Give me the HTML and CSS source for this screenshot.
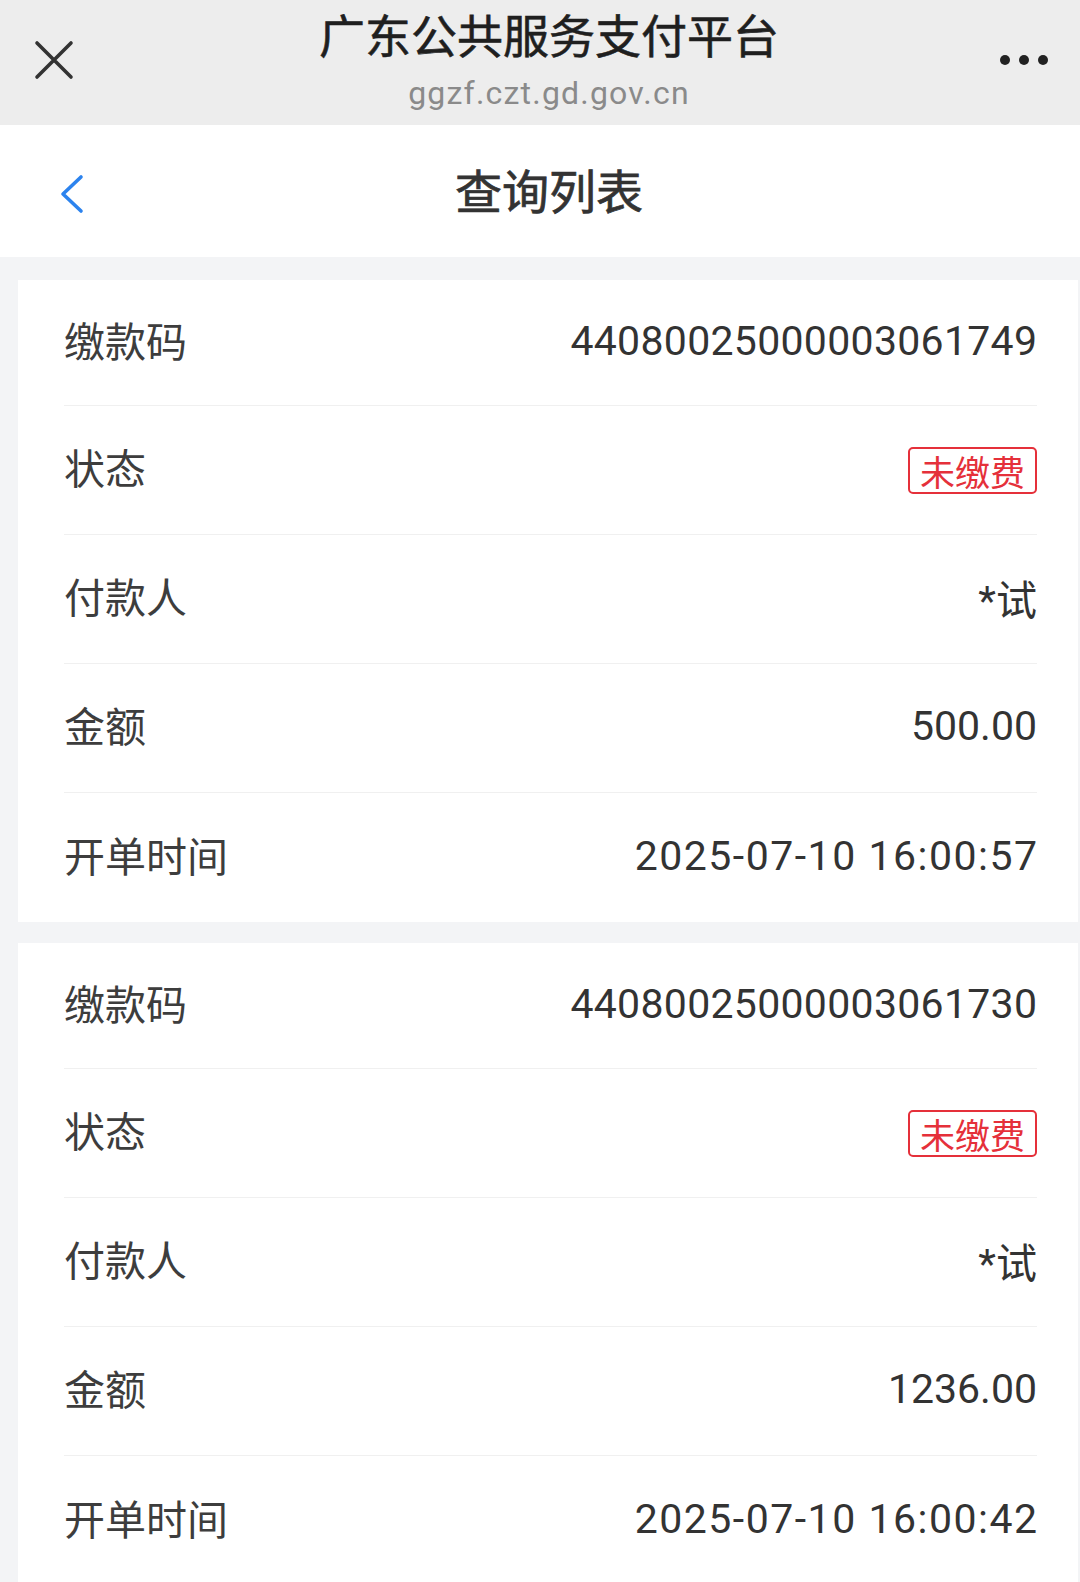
FILE: index.html
```html
<!DOCTYPE html>
<html lang="zh-CN">
<head>
  <meta charset="UTF-8">
  <title>查询列表</title>
  <link rel="stylesheet" href="styles.css">
</head>
<body>
  <header class="topbar">
    <svg class="close" width="40" height="40" viewBox="0 0 40 40">
      <path d="M3 3 L37 37 M37 3 L3 37" stroke="#333" stroke-width="3.6" stroke-linecap="round" fill="none"/>
    </svg>
    <div class="site">
      <h1>广东公共服务支付平台</h1>
      <p>ggzf.czt.gd.gov.cn</p>
    </div>
    <div class="more"><i></i><i></i><i></i></div>
  </header>

  <nav class="navbar">
    <svg class="back" width="24" height="40" viewBox="0 0 24 40">
      <polyline points="21,3 3,20 21,37" stroke="#2c83ee" stroke-width="3.6" stroke-linecap="round" stroke-linejoin="round" fill="none"/>
    </svg>
    <h2>查询列表</h2>
  </nav>

  <main class="list">
    <section class="card">
      <div class="row"><span class="label">缴款码</span><span class="value code">44080025000003061749</span></div>
      <div class="row"><span class="label">状态</span><span class="badge">未缴费</span></div>
      <div class="row"><span class="label">付款人</span><span class="value">*试</span></div>
      <div class="row"><span class="label">金额</span><span class="value">500.00</span></div>
      <div class="row"><span class="label">开单时间</span><span class="value time">2025-07-10 16:00:57</span></div>
    </section>
    <section class="card">
      <div class="row"><span class="label">缴款码</span><span class="value code">44080025000003061730</span></div>
      <div class="row"><span class="label">状态</span><span class="badge">未缴费</span></div>
      <div class="row"><span class="label">付款人</span><span class="value">*试</span></div>
      <div class="row"><span class="label">金额</span><span class="value">1236.00</span></div>
      <div class="row"><span class="label">开单时间</span><span class="value time">2025-07-10 16:00:42</span></div>
    </section>
  </main>
</body>
</html>
```

FILE: styles.css
```css
* {
  margin: 0;
  padding: 0;
  box-sizing: border-box;
}
body {
  background: #f3f4f6;
  font-family: Roboto, "Noto Sans CJK SC", sans-serif;
  color: #333;
  overflow: hidden;
}

/* browser bar */
.topbar {
  height: 125px;
  background: #ededed;
  display: grid;
  grid-template-columns: 120px 1fr 120px;
  align-items: center;
  padding-left: 18px;
}
.close {
  margin-left: 16px;
  margin-top: -6px;
}
.site {
  align-self: start;
  padding-top: 5px;
  text-align: center;
}
.site h1 {
  font-family: "Noto Sans CJK SC", sans-serif;
  font-size: 46px;
  font-weight: 400;
  -webkit-text-stroke: 0.6px #1f1f1f;
  line-height: 56px;
  margin-bottom: 13px;
  color: #1f1f1f;
}
.site p {
  font-family: Roboto, sans-serif;
  font-size: 32px;
  letter-spacing: 1.2px;
  line-height: 38px;
  color: #8a8a8a;
}
.more {
  display: flex;
  gap: 9px;
  margin-left: 40px;
  margin-top: -6px;
}
.more i {
  width: 10px;
  height: 10px;
  border-radius: 50%;
  background: #222;
}

/* page header */
.navbar {
  height: 132px;
  background: #fff;
  display: grid;
  grid-template-columns: 120px 1fr 120px;
  align-items: center;
  padding-left: 18px;
}
.back {
  margin-left: 42px;
  margin-top: 6px;
}
.navbar h2 {
  text-align: center;
  margin-top: -6px;
  font-family: "Noto Sans CJK SC", sans-serif;
  font-size: 47px;
  font-weight: 400;
  -webkit-text-stroke: 0.7px #333;
  color: #333;
}

/* list */
.list {
  display: flex;
  flex-direction: column;
  gap: 21px;
  padding: 23px 2px 0 18px;
}
.card {
  background: #fff;
}
.row {
  height: 129px;
  margin: 0 41px 0 46px;
  display: flex;
  justify-content: space-between;
  align-items: center;
  border-bottom: 1px solid #f0f0f0;
}
.row:first-child {
  height: 126px;
}
.row:last-child {
  border-bottom: none;
}
.label {
  margin-top: -8px;
  font-family: "Noto Sans CJK SC", sans-serif;
  font-size: 41px;
  color: #3d3d3d;
}
.value {
  margin-top: -4px;
  font-size: 41px;
  color: #333;
}
.code {
  letter-spacing: 0.3px;
  margin-right: -0.3px;
}
.time {
  letter-spacing: 1.5px;
  margin-right: -1.5px;
}
.badge {
  font-family: "Noto Sans CJK SC", sans-serif;
  font-size: 35px;
  line-height: 43px;
  padding: 0 10px;
  color: #e5303a;
  border: 2px solid #e5303a;
  border-radius: 5px;
}
```
